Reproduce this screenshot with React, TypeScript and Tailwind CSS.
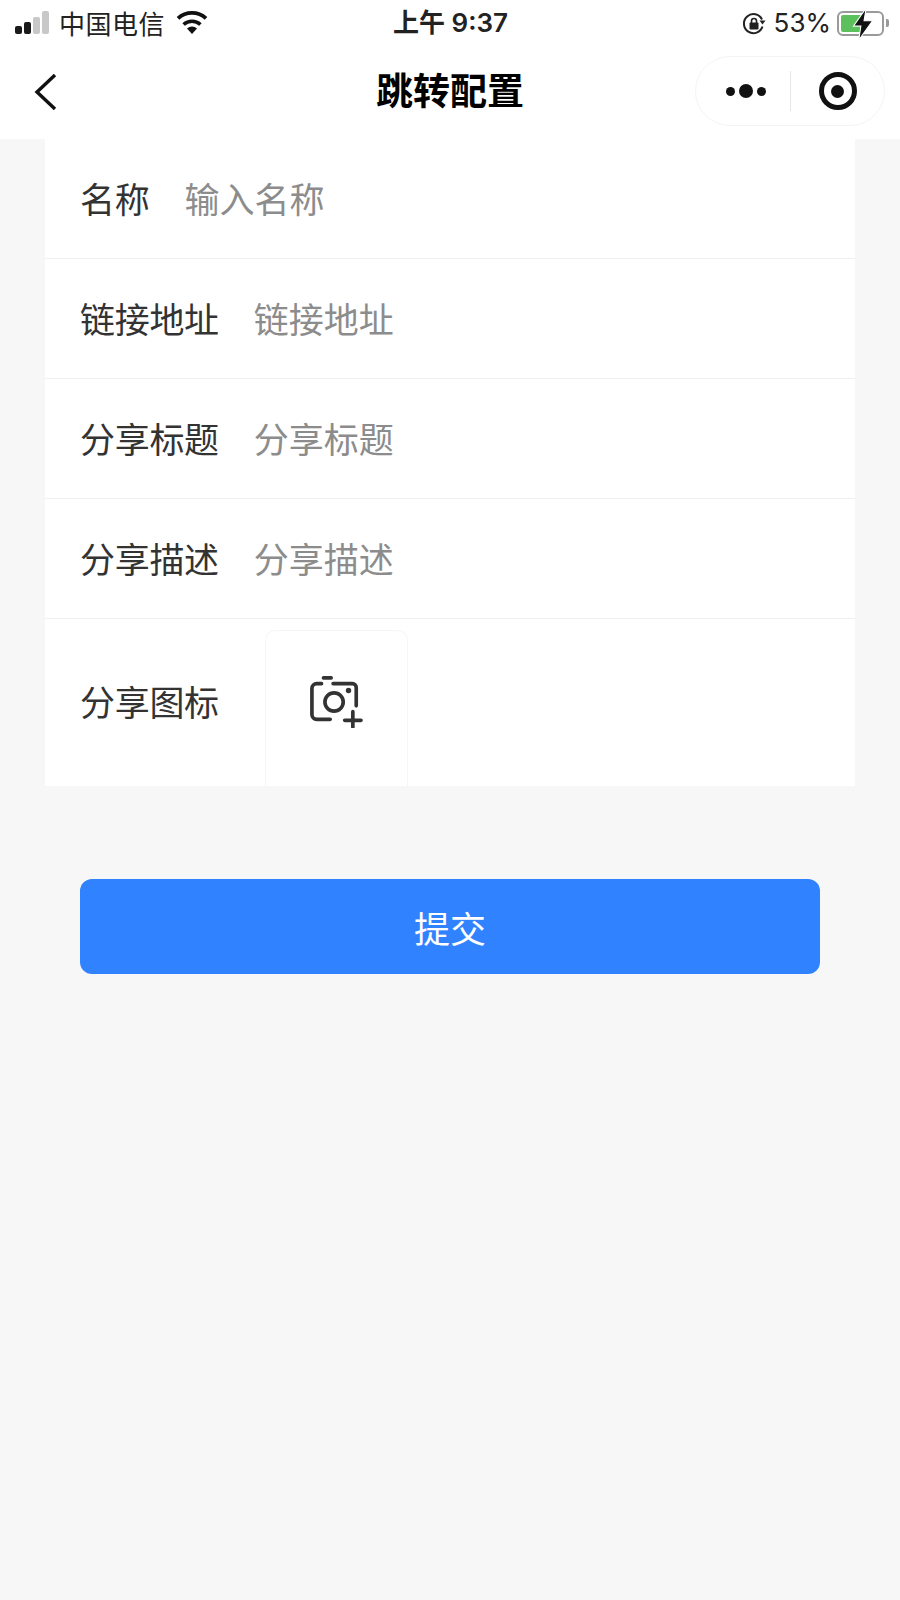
const CJK = "font-['Noto_Sans_CJK_SC','Noto_Sans',sans-serif]";
const LATIN = "font-['Inter','Noto_Sans_CJK_SC',sans-serif]";

const fields = [
  { label: "名称", placeholder: "输入名称" },
  { label: "链接地址", placeholder: "链接地址" },
  { label: "分享标题", placeholder: "分享标题" },
  { label: "分享描述", placeholder: "分享描述" },
];

const StatusBar = () => (
  <div className="h-[46px] flex items-center justify-between pl-[15px] pr-[9px] text-[#222]">
    <div className="flex-1 flex items-center">
      <div className="flex items-end gap-[2px] h-[24px] pb-[1px]">
        <span className="w-[7px] h-[8px] rounded-[2px] bg-[#1a1a1a]" />
        <span className="w-[7px] h-[12px] rounded-[2px] bg-[#1a1a1a]" />
        <span className="w-[7px] h-[17px] rounded-[2px] bg-[#c8c8c8]" />
        <span className="w-[7px] h-[23px] rounded-[2px] bg-[#c8c8c8]" />
      </div>
      <span className="ml-[10px] text-[26px] leading-none tracking-[0.5px]">中国电信</span>
      <svg className="ml-[10px] -mt-[2px]" width="34" height="26" viewBox="0 0 34 26">
        <path d="M17 25l-5-5.6a7.4 7.4 0 0 1 10 0z" fill="#111" />
        <path d="M8.6 15.5a12.4 12.4 0 0 1 16.8 0" fill="none" stroke="#111" strokeWidth="3.6" />
        <path d="M3 9.4a20.6 20.6 0 0 1 28 0" fill="none" stroke="#111" strokeWidth="3.8" />
      </svg>
    </div>
    <div className={`mr-[5px] text-[26px] leading-none font-semibold ${LATIN}`}>上午 9:37</div>
    <div className="flex-1 flex items-center justify-end">
      <svg className="mt-[2px]" width="24" height="24" viewBox="0 0 24 24">
        <path d="M20.5 14.5A9.5 9.5 0 1 1 20 7.5" fill="none" stroke="#222" strokeWidth="2" />
        <path d="M23.5 8.5h-6l3 4z" fill="#222" />
        <rect x="7.5" y="10.5" width="9" height="7" rx="1" fill="#222" />
        <path d="M9.5 11V9a2.5 2.5 0 0 1 5 0v2" fill="none" stroke="#222" strokeWidth="1.6" />
      </svg>
      <span className={`ml-[8px] text-[26px] leading-none ${LATIN}`}>53%</span>
      <div className="relative ml-[6px] w-[47px] h-[25px] rounded-[6px] border-2 border-[#9a9a9a] p-[2px]">
        <div className="w-[22px] h-full rounded-[2px] bg-[#5cc05c]" />
        <svg className="absolute left-[12px] -top-[6px]" width="24" height="34" viewBox="0 0 22 32">
          <path d="M14 1L2 18h7l-2 13L20 13h-8z" fill="#111" stroke="#fff" strokeWidth="1" />
        </svg>
      </div>
      <span className="ml-[2px] mr-[2px] w-[3px] h-[8px] rounded-r-[2px] bg-[#9a9a9a]" />
    </div>
  </div>
);

const NavBar = () => (
  <div className="relative h-[93px] flex items-center justify-center">
    <svg className="absolute left-[33px] top-[26px]" width="26" height="40" viewBox="0 0 26 40">
      <path d="M22 3L4 20l18 17" fill="none" stroke="#111" strokeWidth="3.4" />
    </svg>
    <h1 className="text-[37px] leading-none font-bold text-black -mt-[6px]">跳转配置</h1>
    <div className="absolute left-[695px] top-[10px] w-[190px] h-[70px] rounded-full border border-[#f4f4f4] flex items-center">
      <div className="w-[94px] pl-[6px] flex items-center justify-center gap-[4px]">
        <span className="w-[9px] h-[9px] rounded-full bg-[#111]" />
        <span className="w-[14px] h-[14px] rounded-full bg-[#111]" />
        <span className="w-[9px] h-[9px] rounded-full bg-[#111]" />
      </div>
      <div className="w-px h-[40px] bg-[#e6e6e6]" />
      <div className="flex-1 flex items-center justify-center">
        <div className="w-[38px] h-[38px] rounded-full border-[5px] border-[#111] flex items-center justify-center">
          <span className="w-[13px] h-[13px] rounded-full bg-[#111]" />
        </div>
      </div>
    </div>
  </div>
);

const App = () => {
  return (
    <div className={`w-[900px] h-[1600px] bg-[#f7f7f8] ${CJK}`}>
      <header className="h-[139px] bg-white">
        <StatusBar />
        <NavBar />
      </header>

      <main className="mx-[45px] bg-white">
        {fields.map((field) => (
          <div
            key={field.label}
            className="h-[120px] border-b border-[#f0f0f0] pl-[35px] pb-[2px] flex items-center gap-[35px] text-[35px] leading-none"
          >
            <span className="w-[140px] first:w-auto text-[#333] tracking-[-0.3px]">{field.label}</span>
            <span className="text-[#8c8c8c]">{field.placeholder}</span>
          </div>
        ))}
        <div className="h-[167px] pl-[35px] flex text-[35px] leading-none">
          <span className="text-[#333] mt-[64px] tracking-[-0.3px]">分享图标</span>
          <div className="ml-[46px] mt-[11px] w-[143px] h-[156px] rounded-t-[10px] border border-b-0 border-[#f6f6f6] flex justify-center pt-[45px]">
            <svg className="ml-[-1px]" width="56" height="52" viewBox="0 0 56 54">
              <path d="M22 45H8a5 5 0 0 1-5-5V13a5 5 0 0 1 5-5h5M25 8h20a4 4 0 0 1 4 4v19" fill="none" stroke="#333" strokeWidth="3.8" strokeLinecap="round" />
              <path d="M15 2h8" fill="none" stroke="#333" strokeWidth="3.8" strokeLinecap="round" />
              <circle cx="26" cy="27" r="9.5" fill="none" stroke="#333" strokeWidth="3.8" />
              <circle cx="41" cy="15" r="2.8" fill="#333" />
              <path d="M37 46h17M45.5 37v16" fill="none" stroke="#333" strokeWidth="3.8" strokeLinecap="round" />
            </svg>
          </div>
        </div>
      </main>

      <button className="mt-[93px] ml-[80px] w-[740px] h-[95px] rounded-[12px] bg-[#3182fe] text-white text-[36px] leading-none">
        提交
      </button>
    </div>
  );
};

export default App;
